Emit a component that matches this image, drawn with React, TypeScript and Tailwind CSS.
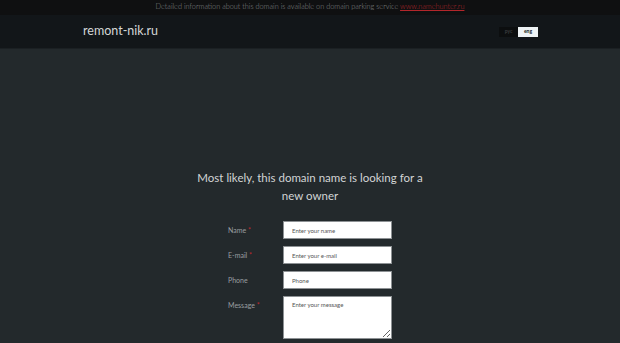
import React from "react";

const font = { fontFamily: "Lato, 'Open Sans', sans-serif" };

function Field({ label, required, placeholder }: { label: string; required?: boolean; placeholder: string }) {
  return (
    <div className="flex items-center h-[18px]">
      <label className="w-[55px] text-[7px] text-[#9a9ea0]">
        {label}
        {required && <span className="text-[#c0272d]"> *</span>}
      </label>
      <input
        className="w-[109px] h-[18px] bg-white border border-[#8d9194] px-[8px] text-[6px] text-[#333] placeholder:text-[#555] outline-none"
        placeholder={placeholder}
      />
    </div>
  );
}

export default function App() {
  return (
    <div className="w-[620px] h-[343px] overflow-hidden bg-[#23292c] flex flex-col" style={font}>
      {/* Top info bar */}
      <div className="h-[15px] bg-[#0f1011] flex items-center justify-center text-[7.3px] font-light text-[#85898b]">
        <span>
          Detailed information about this domain is available on domain parking service{" "}
          <a href="#" className="text-[#b3262b] underline">www.namehunter.ru</a>
        </span>
      </div>

      {/* Header */}
      <div className="h-[34px] bg-[#121619] border-b border-[#1b2023] flex items-center justify-between pl-[83px] pr-[82px]">
        <span className="text-[12.5px] text-[#d4d6d7]">remont-nik.ru</span>
        <div className="flex text-[5px] font-bold">
          <span className="w-[19px] h-[10px] bg-[#0c0e0f] text-[#3a3d3f] flex items-center justify-center">рус</span>
          <span className="w-[20px] h-[10px] bg-[#eef3f5] text-[#121619] flex items-center justify-center">eng</span>
        </div>
      </div>

      {/* Main */}
      <div className="flex-1 flex flex-col items-center pt-[120px]">
        <h1 className="text-[11.5px] leading-[18px] text-[#d2d4d5] text-center w-[236px]">
          Most likely, this domain name is looking for a new owner
        </h1>
        <form className="w-[164px] mt-[16px] flex flex-col gap-[7px]">
          <Field label="Name" required placeholder="Enter your name" />
          <Field label="E-mail" required placeholder="Enter your e-mail" />
          <Field label="Phone" placeholder="Phone" />
          <div className="flex items-start">
            <label className="w-[55px] text-[7px] text-[#9a9ea0] pt-[4px]">
              Message<span className="text-[#c0272d]"> *</span>
            </label>
            <textarea
              className="w-[109px] h-[43px] bg-white border border-[#8d9194] px-[8px] py-[3px] text-[6px] text-[#333] placeholder:text-[#555] outline-none"
              placeholder="Enter your message"
            />
          </div>
        </form>
      </div>
    </div>
  );
}
